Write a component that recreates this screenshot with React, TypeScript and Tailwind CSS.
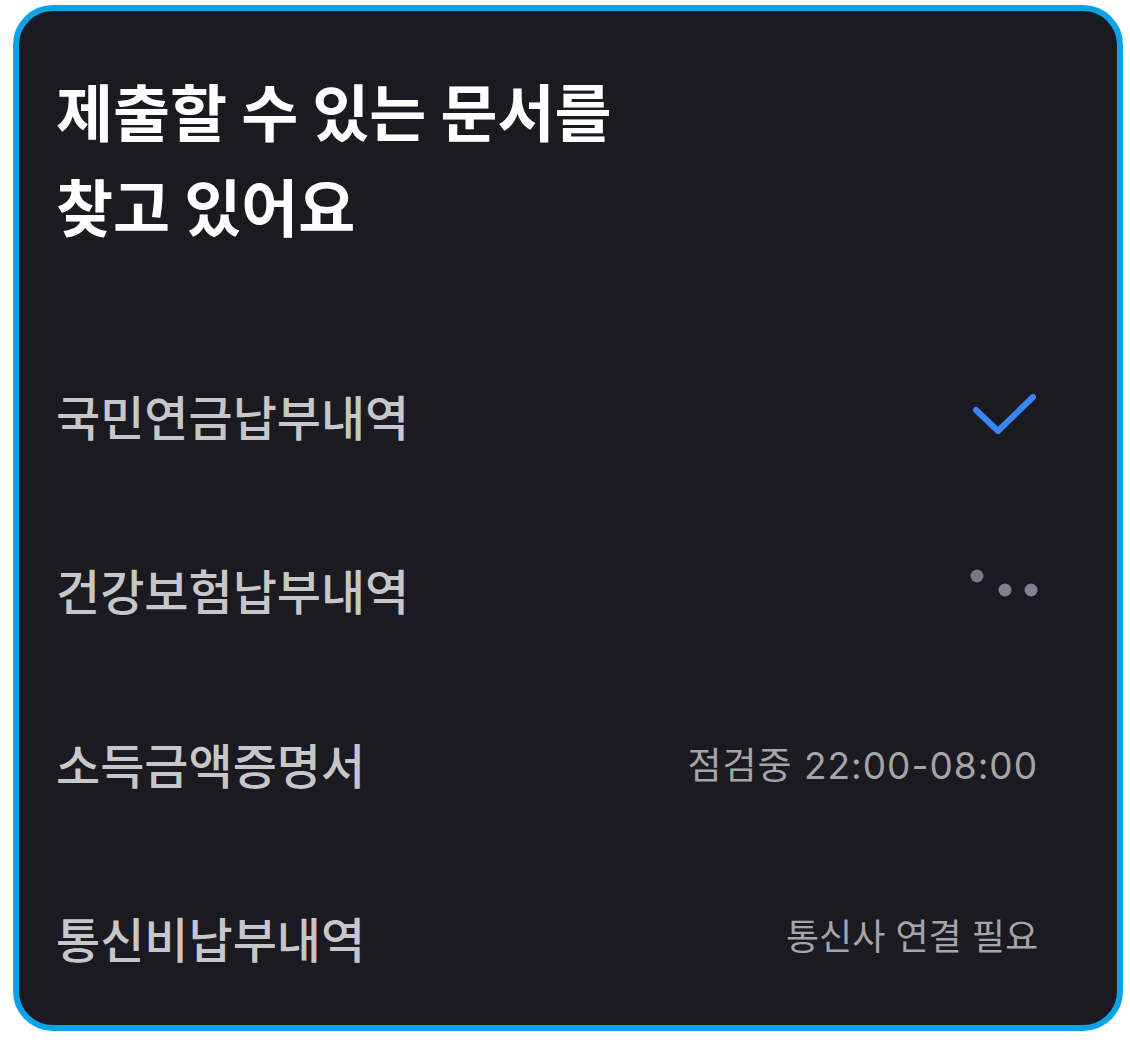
import React from "react";

const font = { fontFamily: '"Noto Sans CJK KR", "Noto Sans", sans-serif' };
const rightFont = { fontFamily: 'Inter, "Noto Sans CJK KR", sans-serif' };

function Check() {
  return (
    <svg width="72" height="48" viewBox="0 0 72 48" fill="none">
      <path d="M10 19 L32 40 L67 6" stroke="#3a86f4" strokeWidth="6" strokeLinecap="round" strokeLinejoin="round" />
    </svg>
  );
}

function Dots() {
  return (
    <svg width="72" height="48" viewBox="0 0 72 48">
      <circle cx="11" cy="11" r="6.5" fill="#737886" />
      <circle cx="39" cy="25" r="6.5" fill="#7d8290" />
      <circle cx="65" cy="25" r="6.5" fill="#7d8290" />
    </svg>
  );
}

function Row({ label, right }: { label: string; right: React.ReactNode }) {
  return (
    <div className="flex h-[174px] items-center justify-between">
      <span className="text-[48px] font-medium leading-none text-[#c6c6cb]">{label}</span>
      {right}
    </div>
  );
}

export default function App() {
  return (
    <div className="w-[1130px] h-[1044px] bg-white pl-[13px] pt-[5px]" style={font}>
      <div className="w-[1110px] h-[1026px] rounded-[40px] border-[6px] border-[#0aa3e8] bg-[#1b1a20] pl-[37px] pr-[79px] pt-[52px] box-border">
        <h1 className="text-[62px] font-bold leading-[95px] text-white">
          제출할 수 있는 문서를
          <br />
          찾고 있어요
        </h1>
        <div className="mt-[75px] flex flex-col">
          <Row label="국민연금납부내역" right={<Check />} />
          <Row label="건강보험납부내역" right={<Dots />} />
          <Row
            label="소득금액증명서"
            right={
              <span className="text-[37px] leading-none tracking-[1px] text-[#a4a4a9] mt-[4px]" style={rightFont}>
                점검중 22:00-08:00
              </span>
            }
          />
          <Row
            label="통신비납부내역"
            right={
              <span className="text-[36px] leading-none text-[#a4a4a9]" style={rightFont}>
                통신사 연결 필요
              </span>
            }
          />
        </div>
      </div>
    </div>
  );
}
